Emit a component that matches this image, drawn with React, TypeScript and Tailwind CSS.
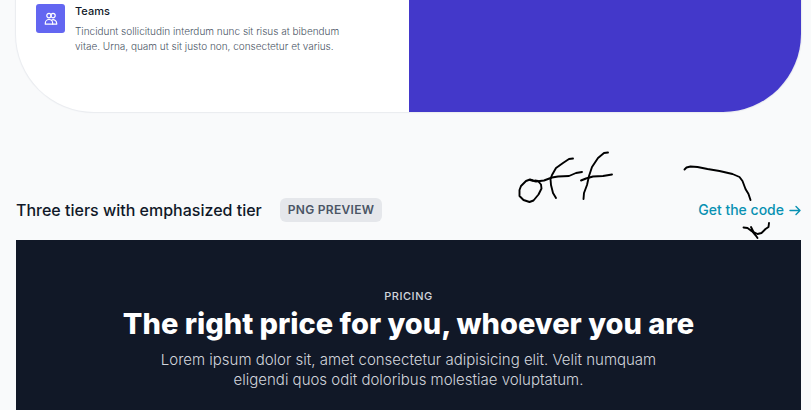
function TeamsIcon() {
  return (
    <svg viewBox="0 0 14 14" className="size-[14px]" fill="none" stroke="#fff" strokeWidth="1.2" strokeLinecap="round" strokeLinejoin="round" aria-hidden="true">
      <circle cx="5" cy="3.600" r="2.200" />
      <circle cx="9" cy="3.600" r="2.200" />
      <path d="M1.300 12.200v-1a3.500 3.500 0 0 1 7.400 0v1H1.300z" />
      <path d="M8.700 12.200h4v-1a3.500 3.500 0 0 0-5.200-3" />
    </svg>
  );
}

function ArrowIcon() {
  return (
    <svg viewBox="0 0 12 12" className="size-3" fill="none" stroke="currentColor" strokeWidth="1.4" strokeLinecap="round" strokeLinejoin="round" aria-hidden="true">
      <path d="M1 6.500h10M7 2.500l4 4-4 4" />
    </svg>
  );
}

function Scribbles() {
  return (
    <svg viewBox="0 0 300 92" className="pointer-events-none absolute -right-[10px] top-9 h-[92px] w-[300px]" fill="none" stroke="#000" strokeWidth="1.9" strokeLinecap="round" strokeLinejoin="round" aria-hidden="true">
      <g transform="translate(-511 -148)">
        <path d="M533 180.500l-3-1-4 1.500-5 5-1.500 4v6l4 4 6 2 4-1.500 5-6 3-6-.5-4-3-3.500-3-.5" />
        <path d="M530 180l6 1.500 8-1 8-3 6-1 11-.5 7-3 6-1" />
        <path d="M573 158.500l-4 .5-6 4-7 5-4 7-1.500 4 .5 6 2 8 3 5" />
        <path d="M608 152.500l-4 .5-6 5-6 9-3 9-2 9-3 8-.5 6" />
        <path d="M581 180.500l5-2 7-2 10-.5 9-1.500" />
        <path d="M684.500 169.500l2-2 4-1 7 .5 10 2 12 2 13 3 7 3 3 4 3 8 3 5 2 6" />
        <path d="M743.500 227.500l4 .5 4 3 6 3 4-1 4-4 3-2 .5-4" />
        <path d="M751 227l2.500 5 4 6M751 230l5 6" />
      </g>
    </svg>
  );
}

export default function App() {
  return (
    <div className="h-screen overflow-hidden bg-gray-50 pl-4 pr-[10px] font-['Inter',sans-serif]">
      <section className="grid h-28 grid-cols-2 overflow-hidden rounded-b-[78px] bg-white shadow-[0_0_1px_1px_#e9ebef]">
        <div className="flex items-start gap-[10px] pl-5 pt-1">
          <span className="flex size-[29px] shrink-0 items-center justify-center rounded-[3px] bg-[#6366f1]">
            <TeamsIcon />
          </span>
          <div>
            <h3 className="text-[11px] font-medium leading-[15px] text-gray-900">Teams</h3>
            <p className="mt-[5px] w-[280px] text-[10px] font-light leading-[15px] text-gray-600">
              Tincidunt sollicitudin interdum nunc sit risus at bibendum vitae. Urna, quam ut sit justo non, consectetur et varius.
            </p>
          </div>
        </div>
        <div className="bg-[#4338ca]" />
      </section>

      <main className="relative">
        <header className="flex items-center pb-[18px] pt-[86px]">
          <h2 className="text-base font-medium leading-6 text-gray-900">Three tiers with emphasized tier</h2>
          <span className="ml-[18px] rounded-md bg-gray-200 px-2 text-xs font-semibold leading-6 tracking-wide text-gray-600">PNG PREVIEW</span>
          <a href="#code" className="ml-auto flex items-center gap-[5px] text-sm font-medium leading-6 text-[#0891b2]">
            Get the code
            <ArrowIcon />
          </a>
        </header>
        <Scribbles />

        <section className="bg-[#111827] pt-[50px] text-center">
          <p className="text-[11px] font-medium leading-3 tracking-wider text-gray-300">PRICING</p>
          <h1 className="mt-1 text-[29px] font-extrabold leading-9 text-white">The right price for you, whoever you are</h1>
          <p className="mx-auto mt-2 max-w-[520px] pb-6 text-[15px] font-light leading-5 text-gray-300">
            Lorem ipsum dolor sit, amet consectetur adipisicing elit. Velit numquam eligendi quos odit doloribus molestiae voluptatum.
          </p>
        </section>
      </main>
    </div>
  );
}
